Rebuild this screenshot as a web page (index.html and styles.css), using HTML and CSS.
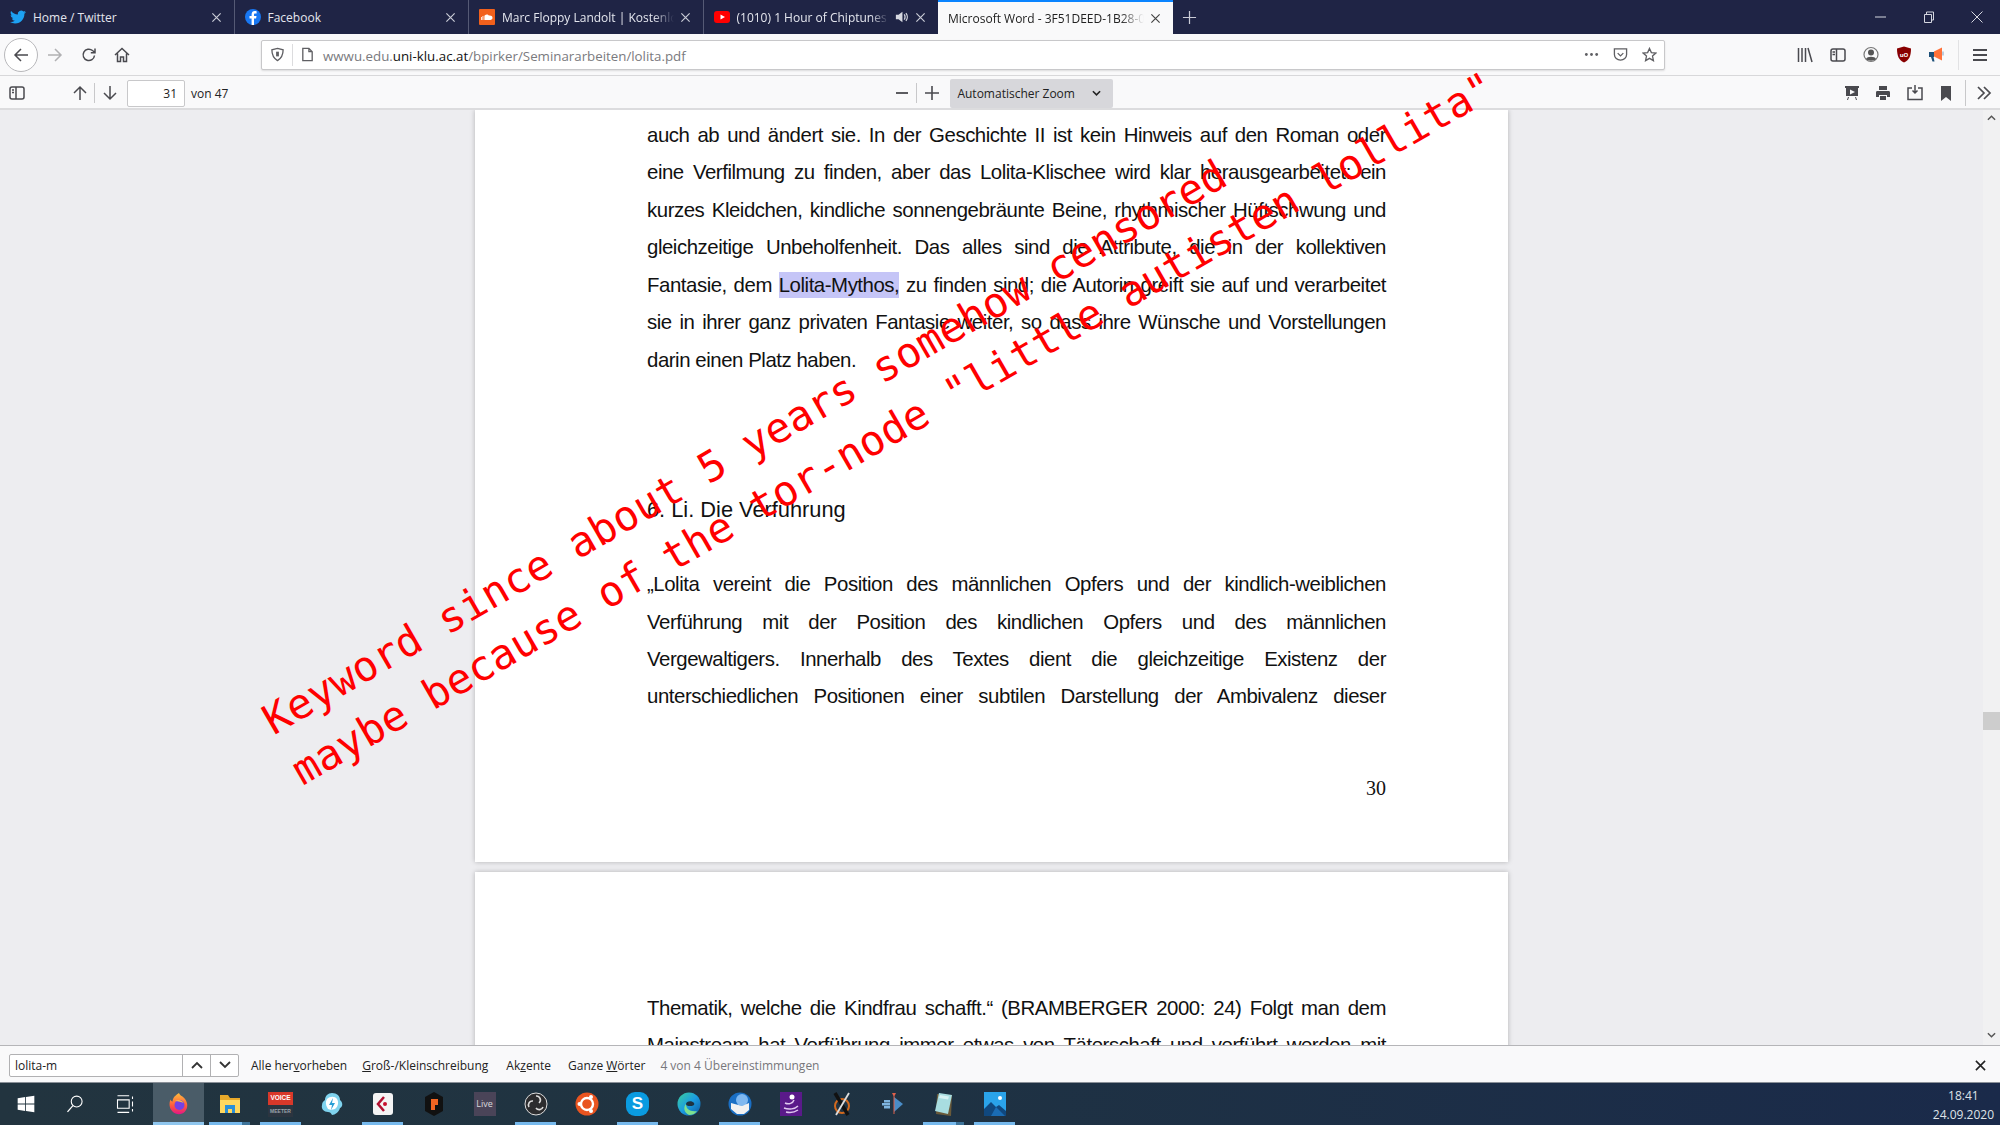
FILE: index.html
```html
<!DOCTYPE html>
<html lang="de">
<head>
    <meta charset="UTF-8">
    <title>lolita.pdf</title>
    <link rel="stylesheet" href="styles.css">
</head>
<body>
<div class="screen">

    <!-- tab strip -->
    <div class="tabbar">
        <div class="tab">
            <svg class="favicon" viewBox="0 0 24 24"><path fill="#1da1f2" d="M23.95 4.57a10 10 0 0 1-2.82.77 4.96 4.96 0 0 0 2.16-2.72c-.95.55-2 .96-3.12 1.19a4.92 4.92 0 0 0-8.38 4.48A14 14 0 0 1 1.64 3.16a4.82 4.82 0 0 0-.67 2.48c0 1.71.87 3.21 2.19 4.1a4.9 4.9 0 0 1-2.23-.62v.06a4.92 4.92 0 0 0 3.95 4.83 5 5 0 0 1-2.21.08 4.94 4.94 0 0 0 4.6 3.42A9.87 9.87 0 0 1 0 19.54a14 14 0 0 0 7.56 2.21c9.05 0 14-7.5 14-14 0-.21 0-.42-.02-.63a9.94 9.94 0 0 0 2.46-2.55z"/></svg>
            <span class="tab-title">Home / Twitter</span>
            <svg class="tab-close" viewBox="0 0 12 12"><path d="M1.5 1.5l9 9M10.5 1.5l-9 9"/></svg>
        </div>
        <div class="tab">
            <svg class="favicon" viewBox="0 0 16 16"><circle cx="8" cy="8" r="8" fill="#1877f2"/><path fill="#fff" d="M9 16V9.6h2.1l.4-2.5H9V5.6c0-.8.3-1.2 1.3-1.2h1.3V2.2c-.5-.1-1.2-.2-1.9-.2C8 2 6.600 3.200 6.600 5.300v1.800H4.500v2.500h2.100V16z"/></svg>
            <span class="tab-title">Facebook</span>
            <svg class="tab-close" viewBox="0 0 12 12"><path d="M1.5 1.5l9 9M10.5 1.5l-9 9"/></svg>
        </div>
        <div class="tab">
            <svg class="favicon" viewBox="0 0 16 16"><rect width="16" height="16" rx="1" fill="#f2601c"/><path fill="#fff" d="M6 11V6.200c.8-.8 2.800-1.400 4 .4 1.500-.5 3.500.4 3.500 2.200 0 1.300-1 2.200-2.200 2.200zM2 11V8h.8v3zM3.500 11V7h.8v4zM4.900 11V6.400h.7V11z"/></svg>
            <span class="tab-title tab-fade">Marc Floppy Landolt | Kostenlos</span>
            <svg class="tab-close" viewBox="0 0 12 12"><path d="M1.5 1.5l9 9M10.5 1.5l-9 9"/></svg>
        </div>
        <div class="tab">
            <svg class="favicon" viewBox="0 0 16 16"><rect y="2" width="16" height="12" rx="3" fill="#f00"/><path fill="#fff" d="M6.500 5.500v5L11 8z"/></svg>
            <span class="tab-title tab-fade">(1010) 1 Hour of Chiptunes - Retro</span>
            <svg class="tab-sound" viewBox="0 0 16 16"><path fill="#d6d8e0" d="M1 5.500h3L8.500 2v12L4 10.500H1z"/><path fill="none" stroke="#d6d8e0" stroke-width="1.500" d="M10.500 5c1.300 1.500 1.300 4.500 0 6M12.500 3.500c2 2.500 2 6.500 0 9"/></svg>
            <svg class="tab-close" viewBox="0 0 12 12"><path d="M1.5 1.5l9 9M10.500 1.500l-9 9"/></svg>
        </div>
        <div class="tab tab-active">
            <span class="tab-title tab-fade">Microsoft Word - 3F51DEED-1B28-0A4C</span>
            <svg class="tab-close" viewBox="0 0 12 12"><path d="M1.5 1.5l9 9M10.500 1.500l-9 9"/></svg>
        </div>
        <svg class="new-tab" viewBox="0 0 16 16"><path d="M8 1v14M1 8h14"/></svg>
        <div class="window-btns">
            <svg viewBox="0 0 12 12"><path d="M0 6h11"/></svg>
            <svg viewBox="0 0 12 12"><path d="M1.500 3.500h7v8h-7zM3.500 3.500v-2.500h7v8h-2"/></svg>
            <svg viewBox="0 0 12 12"><path d="M.5.5l11 11M11.500.5l-11 11"/></svg>
        </div>
    </div>

    <!-- navigation toolbar -->
    <div class="navbar">
        <div class="back-btn">
            <svg class="ic" viewBox="0 0 16 16"><path d="M15 8H2M8 2L2 8l6 6"/></svg>
        </div>
        <svg class="ic ic-off forward" viewBox="0 0 16 16"><path d="M1 8h13M8 2l6 6-6 6"/></svg>
        <svg class="ic reload" viewBox="0 0 16 16"><path d="M13.500 8.500A5.700 5.700 0 1 1 11.500 3.500L14 5.500M14 1.500v4.200H9.800"/></svg>
        <svg class="ic home" viewBox="0 0 16 16"><path d="M1 8l7-6.500L15 8M3.500 6.500V14.500h3V10h3v4.500h3V6.500"/></svg>
        <div class="urlbar">
            <svg class="ic-url" viewBox="0 0 16 16"><path d="M8 1.500l6 1.500c0 5-1.500 9-6 11.500C3.500 12 2 8 2 3z"/><path d="M8 5v5" stroke-width="3"/></svg>
            <span class="url-sep"></span>
            <svg class="ic-url" viewBox="0 0 16 16"><path d="M3 1.500h6.500L13 5v9.500H3zM9.500 1.500V5H13"/></svg>
            <span class="url-text">wwwu.edu.<b>uni-klu.ac.at</b>/bpirker/Seminararbeiten/lolita.pdf</span>
            <svg class="ic-url dots" viewBox="0 0 16 16"><circle cx="2.500" cy="8" r="1.500"/><circle cx="8" cy="8" r="1.500"/><circle cx="13.500" cy="8" r="1.500"/></svg>
            <svg class="ic-url pocket" viewBox="0 0 16 16"><path d="M1.500 2h13v6c0 3.500-3 6-6.500 6S1.500 11.500 1.500 8zM5 6.500L8 9.500l3-3"/></svg>
            <svg class="ic-url star" viewBox="0 0 16 16"><path d="M8 1.500l2 4.500 4.800.5-3.600 3.200 1 4.800L8 12.100l-4.200 2.400 1-4.800L1.200 6.500 6 6z"/></svg>
        </div>
        <div class="nav-right">
            <svg class="ic" viewBox="0 0 16 16"><path d="M1.500 1v14M5 1v14M8.500 1v14M11 1l4 14"/></svg>
            <svg class="ic" viewBox="0 0 16 16"><rect x="1" y="2" width="14" height="12" rx="2"/><path d="M6.500 2v12M2.500 5h2.500M2.500 7.500h2.500"/></svg>
            <svg class="ic-account" viewBox="0 0 16 16"><circle cx="8" cy="8" r="7" fill="none" stroke="#777" stroke-width="1.200"/><circle cx="8" cy="6" r="3" fill="#555"/><path fill="#555" d="M3 12.500c1-3 9-3 10 0-2 2.300-8 2.300-10 0z"/></svg>
            <svg class="ic-ublock" viewBox="0 0 16 16"><path fill="#800" d="M8 0l7 2c0 7-1.500 11.500-7 14C2.500 13.500 1 9 1 2z"/><text x="8" y="10.500" class="ublock-text">uO</text></svg>
            <svg class="ic-mega" viewBox="0 0 16 16"><path fill="#ff7139" d="M5 5l8-4v13L5 10z"/><path fill="#1c4f78" d="M0 5.500h5v5H0zM2 10.500h2.500l1 4.500H3.500z"/><path fill="#bcd" d="M13 5h2v4h-2z"/></svg>
            <span class="tool-sep"></span>
            <svg class="ic burger" viewBox="0 0 16 16"><path d="M1 3h14M1 8h14M1 13h14" stroke-width="1.800"/></svg>
        </div>
    </div>

    <!-- pdf.js toolbar -->
    <div class="pdfbar">
        <svg class="ic sidebar-toggle" viewBox="0 0 16 16"><rect x="1" y="2" width="14" height="12" rx="2"/><path d="M7 2v12M3 5h2M3 7.500h2"/></svg>
        <svg class="ic page-up" viewBox="0 0 16 16"><path d="M8 15V2M2 8l6-6 6 6"/></svg>
        <span class="pdf-sep"></span>
        <svg class="ic page-down" viewBox="0 0 16 16"><path d="M8 1v13M2 8l6 6 6-6"/></svg>
        <div class="page-input">31</div>
        <span class="page-count">von 47</span>
        <div class="zoom-group">
            <svg class="ic" viewBox="0 0 16 16"><path d="M2 8h12" stroke-width="1.800"/></svg>
            <span class="pdf-sep"></span>
            <svg class="ic" viewBox="0 0 16 16"><path d="M8 1v14M1 8h14" stroke-width="1.600"/></svg>
            <div class="zoom-select">
                <span>Automatischer Zoom</span>
                <svg class="chev" viewBox="0 0 10 6"><path d="M1 1l4 4 4-4"/></svg>
            </div>
        </div>
        <div class="pdf-right">
            <svg class="ic-fill" viewBox="0 0 16 16"><path d="M1 1h14v2h-1v8H2V3H1zM6 4.500v5L11 7zM4 12h1l-1 3H3zM11 12h1l1 3h-1z" fill-rule="evenodd"/></svg>
            <svg class="ic-fill" viewBox="0 0 16 16"><path d="M4 1h8v4H4zM2 6h12a1.500 1.500 0 0 1 1 1.500V12h-3v-2H4v2H1V7.500A1.500 1.500 0 0 1 2 6zM5 11h6v4H5z"/></svg>
            <svg class="ic save" viewBox="0 0 16 16"><path d="M5 3H1v11.500h14V3h-4M8 0v8M5.500 5.500L8 8l2.500-2.500"/></svg>
            <svg class="ic-fill" viewBox="0 0 16 16"><path d="M3 1h10v15l-5-4-5 4z"/></svg>
            <span class="pdf-sep tall"></span>
            <svg class="ic more" viewBox="0 0 16 16"><path d="M2 2l6 6-6 6M8 2l6 6-6 6" stroke-width="1.700"/></svg>
        </div>
    </div>

    <!-- document -->
    <div class="viewer">
        <div class="pages">
            <div class="page page-first">
                <p class="line">auch ab und ändert sie. In der Geschichte II ist kein Hinweis auf den Roman oder</p>
                <p class="line">eine Verfilmung zu finden, aber das Lolita-Klischee wird klar herausgearbeitet: ein</p>
                <p class="line">kurzes Kleidchen, kindliche sonnengebräunte Beine, rhythmischer Hüftschwung und</p>
                <p class="line">gleichzeitige Unbeholfenheit. Das alles sind die Attribute, die in der kollektiven</p>
                <p class="line">Fantasie, dem <mark class="hit">Lolita-Mythos,</mark> zu finden sind; die Autorin greift sie auf und verarbeitet</p>
                <p class="line">sie in ihrer ganz privaten Fantasie weiter, so dass ihre Wünsche und Vorstellungen</p>
                <p class="line line-last">darin einen Platz haben.</p>
                <h2 class="section">6. Li. Die Verführung</h2>
                <p class="line">„Lolita vereint die Position des männlichen Opfers und der kindlich-weiblichen</p>
                <p class="line">Verführung mit der Position des kindlichen Opfers und des männlichen</p>
                <p class="line">Vergewaltigers. Innerhalb des Textes dient die gleichzeitige Existenz der</p>
                <p class="line">unterschiedlichen Positionen einer subtilen Darstellung der Ambivalenz dieser</p>
                <div class="page-no">30</div>
            </div>
            <div class="page page-second">
                <p class="line">Thematik, welche die Kindfrau schafft.“ (BRAMBERGER 2000: 24) Folgt man dem</p>
                <p class="line">Mainstream hat Verführung immer etwas von Täterschaft und verführt werden mit</p>
            </div>
        </div>
        <div class="scrollbar">
            <svg class="scroll-arrow" viewBox="0 0 10 6"><path d="M1 5l4-4 4 4"/></svg>
            <div class="scroll-thumb"></div>
            <svg class="scroll-arrow" viewBox="0 0 10 6"><path d="M1 1l4 4 4-4"/></svg>
        </div>
    </div>

    <!-- find bar -->
    <div class="findbar">
        <div class="find-box">
            <span class="find-input">lolita-m</span>
            <span class="find-btn"><svg viewBox="0 0 12 8"><path d="M1 7l5-5 5 5"/></svg></span>
            <span class="find-btn"><svg viewBox="0 0 12 8"><path d="M1 1l5 5 5-5"/></svg></span>
        </div>
        <span class="find-opt opt-all">Alle her<u>v</u>orheben</span>
        <span class="find-opt opt-case"><u>G</u>roß-/Kleinschreibung</span>
        <span class="find-opt opt-acc">Ak<u>z</u>ente</span>
        <span class="find-opt opt-word">Ganze <u>W</u>örter</span>
        <span class="find-status">4 von 4 Übereinstimmungen</span>
        <svg class="find-close" viewBox="0 0 12 12"><path d="M1 1l10 10M11 1L1 11"/></svg>
    </div>

    <!-- windows taskbar -->
    <div class="taskbar">
        <div class="task"><svg class="tk" viewBox="0 0 24 24"><path fill="#fff" d="M2 5l9-1.300V11.500H2zM12 3.500L22 2v9.500H12zM2 12.500h9v7.800L2 19zM12 12.500h10V22l-10-1.500z"/></svg></div>
        <div class="task task-search"><svg class="tk" viewBox="0 0 24 24"><circle cx="14" cy="9" r="6.500" fill="none" stroke="#fff" stroke-width="1.300"/><path stroke="#fff" stroke-width="1.500" d="M9.500 14L3 21.500"/></svg></div>
        <div class="task task-view"><svg class="tk" viewBox="0 0 24 24"><path fill="none" stroke="#fff" stroke-width="1.300" d="M3 2h14M3 22h14M3 7h14v10H3zM21 3v3M21 9v6M21 18v3"/></svg></div>
        <div class="task task-active task-open"><svg class="tk-big" viewBox="0 0 24 24"><defs><linearGradient id="fx" x1="0" y1="0" x2="0" y2="1"><stop offset="0" stop-color="#ffbd3d"/><stop offset=".6" stop-color="#ff5a3c"/><stop offset="1" stop-color="#e31587"/></linearGradient></defs><path fill="url(#fx)" d="M12 1c1 3 4 3 6 6 3 4 3 9 0 12.500-3 3.500-9 3.500-12.500 0C2 16 2 11 3.500 7.500 4 9 5 9.500 5.500 9.500 6 5 9 3 12 1z"/><circle cx="12.500" cy="13" r="5" fill="#7542e5"/><path fill="#ffbd3d" d="M8 9c3-2 7-1 8.500 2-2-1.500-5-1.500-8.500-2z"/></svg></div>
        <div class="task task-open task-stack"><svg class="tk-big" viewBox="0 0 24 24"><path fill="#e8a92a" d="M2 3h8l2 3h10v5H2z"/><path fill="#ffd75e" d="M2 8h20v13H2z"/><path fill="#2a8fd8" d="M7 13h10v8h-3v-4h-4v4H7z"/></svg></div>
        <div class="task task-open"><div class="voice"><span class="voice-top">VOICE</span><span class="voice-bot">MEETER</span></div></div>
        <div class="task"><svg class="tk-big" viewBox="0 0 24 24"><path fill="#7fd3ee" d="M12 1c5 0 8 3 8 7 3 2 3 7 0 8-1 4-5 7-8 7-1-2-2-3-4-3-4 0-7-3-6-7 0-3 2-4 3-5 0-4 3-7 7-7z"/><path fill="#fff" d="M7 7c3-3 8-3 10 0 2 3 1 8-2 10-3 1-5 1-7 0-2-3-3-7-1-10z"/><path fill="#2a9fd6" d="M13 6l-4 7h3l-1 5 4-7h-3z"/></svg></div>
        <div class="task task-open"><svg class="tk-big" viewBox="0 0 24 24"><rect x="2" y="1" width="20" height="22" rx="3" fill="#f4f4f4"/><path fill="none" stroke="#b01030" stroke-width="2.500" d="M13 5l-6 7 6 7"/><circle cx="14" cy="12" r="2" fill="#c8102e"/></svg></div>
        <div class="task"><svg class="tk-big" viewBox="0 0 24 24"><path fill="#111" d="M12 0l9 5v14l-9 5-9-5V5z"/><path fill="#f26522" d="M9 7h7v6h-3v5H9z"/></svg></div>
        <div class="task"><div class="live">Live</div></div>
        <div class="task task-open"><svg class="tk-big" viewBox="0 0 24 24"><circle cx="12" cy="12" r="11" fill="#2c2c2e" stroke="#ddd" stroke-width="1"/><path fill="none" stroke="#ddd" stroke-width="1.600" d="M12 4a4 4 0 0 1 3 7M19 15a4 4 0 0 1-7 1M5 15a4 4 0 0 1 4-6"/></svg></div>
        <div class="task"><svg class="tk-big" viewBox="0 0 24 24"><circle cx="12" cy="12" r="11.500" fill="#e95420"/><circle cx="12" cy="12" r="6" fill="none" stroke="#fff" stroke-width="2.400"/><circle cx="4.500" cy="12" r="2" fill="#fff"/><circle cx="16" cy="5" r="2" fill="#fff"/><circle cx="16" cy="19" r="2" fill="#fff"/></svg></div>
        <div class="task task-open"><div class="skype">S</div></div>
        <div class="task"><svg class="tk-big" viewBox="0 0 24 24"><defs><linearGradient id="edge" x1="0" y1="0" x2="1" y2="1"><stop offset="0" stop-color="#3bd09b"/><stop offset=".5" stop-color="#1b9de2"/><stop offset="1" stop-color="#0c59a4"/></linearGradient></defs><circle cx="12" cy="12" r="11.500" fill="url(#edge)"/><path fill="#1f3342" d="M9 12c0-3 6-4 8-1 1 2-1 3-3 3-2 0-5 0-5-2z"/><path fill="#7ee08f" d="M12 23c-5-2-6-8-3-11 0 5 4 8 11 7-2 3-5 4-8 4z"/></svg></div>
        <div class="task task-open"><svg class="tk-big" viewBox="0 0 24 24"><circle cx="12" cy="12" r="11.500" fill="#1a6fc4"/><circle cx="14" cy="8" r="6" fill="#7fb8f0"/><path fill="#f1f1f1" d="M3 11l11 3 7-3v7l-5 4H9l-6-5z"/></svg></div>
        <div class="task"><svg class="tk-big" viewBox="0 0 24 24"><rect x="1" width="22" height="24" fill="#5a1a8a"/><circle cx="13" cy="5" r="2.500" fill="#fff"/><path fill="none" stroke="#e0c8f0" stroke-width="1.500" d="M6 11c4 2 8 0 9-3M5 16c5 2 11 1 14-2M7 20c4 1 9 0 12-2"/></svg></div>
        <div class="task"><svg class="tk-big" viewBox="0 0 24 24"><circle cx="12" cy="14" r="7" fill="none" stroke="#d2691e" stroke-width="2"/><path stroke="#111" stroke-width="3.500" d="M5 1l13 22"/><path stroke="#ddd" stroke-width="1.800" d="M19 1L6 23"/></svg></div>
        <div class="task"><svg class="tk-big" viewBox="0 0 24 24"><path fill="#4a8cc7" d="M13 5l9 7-9 8z"/><path fill="#7fb5e0" d="M3 8h6v2.500H3zM1 11h8v2.500H1zM3 14h6v2.500H3z"/><path fill="#e0604a" d="M11 1h4l-1.500 3V22h-1V4z"/></svg></div>
        <div class="task task-open task-stack"><svg class="tk-big" viewBox="0 0 24 24"><path fill="#6a5a3a" d="M5 2l15 1-1 21-15-2z"/><path fill="#a8dde0" d="M7 1l13 2-4 19-13-3z"/><path fill="#d8f2f2" d="M8 3l9 1.500-1 3L7 6z"/></svg></div>
        <div class="task task-open"><svg class="tk-big" viewBox="0 0 24 24"><rect x="1" width="22" height="24" fill="#2aa3ea"/><circle cx="17" cy="6" r="2" fill="#fff"/><path fill="#10487f" d="M1 24V17l7-7 5 5 3-2 7 6v5z"/><path fill="#1a6cb4" d="M8 24l5-9 9 9z"/></svg></div>
        <div class="clock">
            <span>18:41</span>
            <span>24.09.2020</span>
        </div>
    </div>

    <!-- the red note someone wrote over the screenshot -->
    <div class="scribble">Keyword since about 5 years somehow censored
maybe because of the tor-node "little autisten lollita"</div>
</div>
</body>
</html>
```

FILE: styles.css
```css
* {
    box-sizing: border-box;
}

html, body {
    margin: 0;
    height: 100%;
    overflow: hidden;
}

body {
    font-family: "Open Sans", "Liberation Sans", sans-serif;
    font-size: 12px;
    color: #222;
}

svg {
    display: block;
    flex: none;
}

.screen {
    position: relative;
    width: 2000px;
    height: 1125px;
    display: flex;
    flex-direction: column;
    overflow: hidden;
}

/* tabs */
.tabbar {
    height: 34px;
    flex: none;
    display: flex;
    align-items: stretch;
    background: #1f2445;
    color: #e4e6ee;
}

.tab {
    width: 234.500px;
    display: flex;
    align-items: center;
    padding: 0 12px 0 10px;
    border-right: 1px solid #555a75;
}

.tab:nth-child(4) {
    border-right: none;
}

.tab-active {
    background: #f9f9fa;
    color: #222;
    border-right: none;
    border-top: 2px solid #0a84ff;
}

.favicon {
    width: 16px;
    height: 16px;
    margin-right: 7px;
}

.tab-title {
    flex: 1;
    min-width: 0;
    padding-top: 1px;
    white-space: nowrap;
    overflow: hidden;
    font-size: 12px;
}

.tab-fade {
    -webkit-mask-image: linear-gradient(to right, #000 88%, transparent);
    mask-image: linear-gradient(to right, #000 88%, transparent);
}

.tab-close {
    width: 11px;
    height: 11px;
    margin-left: 6px;
    fill: none;
    stroke: #c9cbd6;
    stroke-width: 1.300;
}

.tab-active .tab-close {
    stroke: #444;
}

.tab-sound {
    width: 14px;
    height: 14px;
    margin-left: 6px;
}

.new-tab {
    width: 15px;
    height: 15px;
    align-self: center;
    margin-left: 9px;
    fill: none;
    stroke: #c9cbd6;
    stroke-width: 1.300;
}

.window-btns {
    margin-left: auto;
    display: flex;
    align-items: center;
    gap: 36px;
    padding-right: 17px;
}

.window-btns svg {
    width: 12px;
    height: 12px;
    fill: none;
    stroke: #d5d7e0;
    stroke-width: 1;
}

/* toolbars */
.ic {
    width: 16px;
    height: 16px;
    fill: none;
    stroke: #4a4a4f;
    stroke-width: 1.500;
}

.ic-off {
    stroke: #b1b1b3;
}

.ic-fill {
    width: 16px;
    height: 16px;
    fill: #4a4a4f;
}

.navbar {
    height: 42px;
    flex: none;
    display: flex;
    align-items: center;
    background: #f9f9fa;
    border-bottom: 1px solid #d8d8da;
    padding-left: 4px;
}

.back-btn {
    width: 34px;
    height: 34px;
    border-radius: 50%;
    border: 1px solid #b8b8bb;
    background: #fff;
    display: flex;
    align-items: center;
    justify-content: center;
}

.forward {
    margin-left: 9px;
}

.reload {
    margin-left: 18px;
}

.home {
    margin-left: 17px;
}

.urlbar {
    width: 1404px;
    height: 30px;
    margin-left: 131px;
    display: flex;
    align-items: center;
    background: #fff;
    border: 1px solid #c8c8ca;
    border-radius: 2px;
    box-shadow: 0 1px 2px rgba(0, 0, 0, 0.12);
    padding-left: 8px;
}

.ic-url {
    width: 15px;
    height: 15px;
    fill: none;
    stroke: #5f5f63;
    stroke-width: 1.400;
}

.url-sep {
    width: 1px;
    height: 22px;
    margin: 0 7px;
    background: #dcdcde;
}

.url-text {
    margin: 2px 0 0 8px;
    font-size: 13.300px;
    color: #7a7a7e;
}

.url-text b {
    font-weight: 400;
    color: #111;
}

.dots {
    margin-left: auto;
    fill: #5f5f63;
    stroke: none;
}

.pocket {
    margin-left: 14px;
}

.star {
    margin-left: 14px;
    margin-right: 7px;
}

.nav-right {
    margin-left: auto;
    display: flex;
    align-items: center;
    gap: 17px;
    padding-right: 12px;
}

.ic-account, .ic-ublock, .ic-mega {
    width: 16px;
    height: 17px;
}

.ublock-text {
    font-size: 6px;
    font-weight: 700;
    fill: #fff;
    text-anchor: middle;
}

.tool-sep {
    width: 1px;
    height: 30px;
    background: #e2e2e4;
    margin-left: -4px;
    margin-right: -4px;
}

.pdfbar {
    height: 34px;
    flex: none;
    display: flex;
    align-items: center;
    background: #f9f9fa;
    border-bottom: 2px solid #dcdcde;
    padding: 2px 0 0 9px;
}

.page-up {
    margin-left: 47px;
}

.pdf-sep {
    width: 1px;
    height: 20px;
    background: #c8c8ca;
    margin: 0 7px 0 6px;
}

.pdf-sep.tall {
    height: 26px;
    margin: 0 -5px;
}

.page-input {
    width: 58px;
    height: 27px;
    margin-left: 9px;
    border: 1px solid #c8c8ca;
    background: #fff;
    border-radius: 2px;
    text-align: right;
    line-height: 25px;
    padding-right: 7px;
}

.page-count {
    margin-left: 6px;
}

.zoom-group {
    display: flex;
    align-items: center;
    margin-left: 666px;
}

.zoom-select {
    width: 163px;
    height: 29px;
    margin-left: 10px;
    padding: 0 12px 0 7px;
    display: flex;
    align-items: center;
    justify-content: space-between;
    background: #d7d7db;
    border-radius: 2px;
}

.chev {
    width: 9px;
    height: 6px;
    fill: none;
    stroke: #222;
    stroke-width: 1.800;
}

.pdf-right {
    margin-left: auto;
    display: flex;
    align-items: center;
    gap: 15.500px;
    padding-right: 8px;
}

/* pdf pages */
.viewer {
    flex: 1;
    min-height: 0;
    display: flex;
    justify-content: space-between;
    overflow: hidden;
    background: #ededf0;
}

.pages {
    width: 1033px;
    margin-left: 475px;
}

.page {
    background: #fff;
    box-shadow: 0 0 5px rgba(0, 0, 0, 0.25);
    padding: 0 122px 0 172px;
    font-family: "Liberation Sans", Arial, sans-serif;
    font-size: 20.400px;
    letter-spacing: -0.450px;
    color: #111;
}

.page-first {
    height: 752px;
    padding-top: 7px;
}

.page-second {
    height: 400px;
    margin-top: 10px;
    padding-top: 118px;
}

.line {
    margin: 0;
    height: 37.450px;
    line-height: 37.450px;
    text-align: justify;
    text-align-last: justify;
}

.line-last {
    text-align-last: left;
}

.hit {
    background: #c5c5f7;
    color: inherit;
    padding: 2px 0;
}

.section {
    margin: 112px 0 38px;
    height: 37px;
    line-height: 37px;
    font-size: 21.800px;
    letter-spacing: 0;
    font-weight: 400;
}

.page-no {
    margin-top: 54px;
    text-align: right;
    font-family: "Liberation Serif", serif;
    font-size: 20px;
    letter-spacing: 0;
    line-height: 37px;
}

.scrollbar {
    width: 17px;
    display: flex;
    flex-direction: column;
    align-items: center;
    background: #f1f1f2;
}

.scroll-arrow {
    width: 9px;
    height: 6px;
    margin-top: 5px;
    fill: none;
    stroke: #555;
    stroke-width: 1.600;
}

.scroll-thumb {
    width: 100%;
    height: 18px;
    margin: 591px 0 auto;
    background: #cdcdcd;
}

.scroll-arrow:last-child {
    margin: 0 0 7px;
}

/* find bar */
.findbar {
    height: 38px;
    flex: none;
    display: flex;
    align-items: center;
    background: #f9f9fa;
    border-top: 1px solid #b5b5b8;
    border-bottom: 1px solid #8a9098;
    padding: 2px 0 0 9px;
}

.find-box {
    width: 230px;
    height: 23px;
    display: flex;
    background: #fff;
    border: 1px solid #b1b1b3;
    border-radius: 2px;
}

.find-input {
    flex: 1;
    padding-left: 5px;
    line-height: 21px;
}

.find-btn {
    width: 28px;
    display: flex;
    align-items: center;
    justify-content: center;
    border-left: 1px solid #b1b1b3;
}

.find-btn svg {
    width: 12px;
    height: 8px;
    fill: none;
    stroke: #333;
    stroke-width: 1.800;
}

.opt-all { margin-left: 12px; }
.opt-case { margin-left: 15px; }
.opt-acc { margin-left: 18px; }
.opt-word { margin-left: 17px; }

.find-status {
    margin-left: 15px;
    color: #77777b;
}

.find-close {
    width: 11px;
    height: 11px;
    margin-left: auto;
    margin-right: 14px;
    fill: none;
    stroke: #222;
    stroke-width: 1.700;
}

/* windows taskbar */
.taskbar {
    height: 42px;
    flex: none;
    display: flex;
    background: linear-gradient(to right, #22343f, #1f3342 40%, #1a2a4a);
}

.task {
    position: relative;
    width: 51px;
    display: flex;
    align-items: center;
    justify-content: center;
}

.task-search {
    padding-right: 3px;
}

.task-view {
    padding-right: 6px;
}

.task-active {
    background: #4a5c68;
}

.task-open::after {
    content: "";
    position: absolute;
    left: 5px;
    right: 5px;
    bottom: 0;
    height: 3px;
    background: #76b9ed;
}

.task-active::after {
    left: 0;
    right: 0;
    background: #8fc6ee;
}

.task-stack::before {
    content: "";
    position: absolute;
    left: 38px;
    right: 5px;
    bottom: 0;
    height: 3px;
    background: #3d7399;
    z-index: 1;
}

.tk {
    width: 20px;
    height: 22px;
}

.tk-big {
    width: 24px;
    height: 24px;
}

.voice {
    width: 25px;
    display: flex;
    flex-direction: column;
    text-align: center;
    font-family: "Liberation Sans", sans-serif;
    font-weight: 700;
    font-size: 6.500px;
    line-height: 12px;
}

.voice-top {
    background: #d8382a;
    color: #fff;
    height: 13px;
}

.voice-bot {
    background: #2c3540;
    color: #9aa2aa;
    height: 12px;
    font-size: 5px;
}

.live {
    width: 22px;
    height: 24px;
    background: #4a4458;
    color: #d8d8dc;
    font-size: 9px;
    line-height: 24px;
    text-align: center;
}

.skype {
    width: 23px;
    height: 24px;
    border-radius: 9px;
    background: #0a9be0;
    color: #fff;
    font-family: "Liberation Sans", sans-serif;
    font-weight: 700;
    font-size: 17px;
    line-height: 24px;
    text-align: center;
}

.clock {
    margin-left: auto;
    padding: 2px 6px 0 0;
    display: flex;
    flex-direction: column;
    align-items: center;
    justify-content: center;
    gap: 2px;
    color: #dfe3e8;
    font-size: 12px;
    line-height: 17px;
}

/* red annotation */
.scribble {
    position: absolute;
    left: 310px;
    top: 723px;
    margin-top: -40px;
    transform: rotate(-30deg);
    transform-origin: left bottom;
    white-space: pre;
    font-family: "DejaVu Sans Mono", monospace;
    font-size: 41.700px;
    line-height: 58px;
    color: #f00;
}
```
